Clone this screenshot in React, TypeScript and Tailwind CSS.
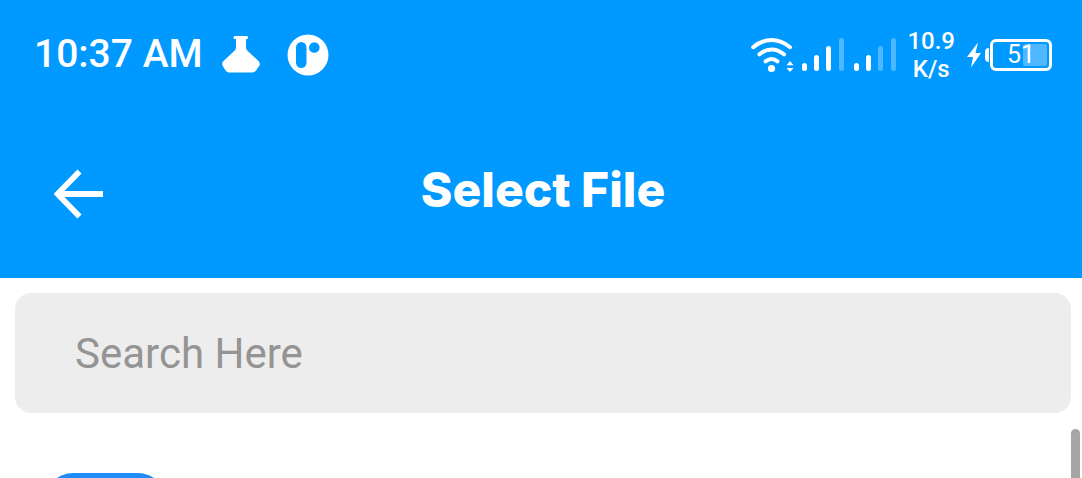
import React from "react";

function FlaskIcon() {
  return (
    <svg width="40" height="40" viewBox="0 0 40 40" fill="#fff" aria-hidden="true">
      <path d="M13.500 1h12.500q1 0 1 1.500T26 4h-1v8.500q0 2 1.500 3.200L37.500 26Q39.500 28 38.500 30.500L35 35.500Q33.500 37.500 31.500 37.500H8Q6 37.500 4.500 35.500L1.500 30.500Q.5 28 2.500 26L13.500 15.700Q15 14.500 15 12.500V4h-1.500q-1 0-1-1.500t1-1.500z" />
    </svg>
  );
}

function CircleLogo() {
  return (
    <svg width="42" height="42" viewBox="0 0 42 42" aria-hidden="true">
      <circle cx="21" cy="21" r="20.500" fill="#fff" />
      <rect x="9" y="8" width="10.500" height="26" rx="5.250" fill="#0099ff" />
      <circle cx="27.300" cy="13.500" r="5.300" fill="#0099ff" />
    </svg>
  );
}

function WifiIcon() {
  return (
    <svg width="44" height="36" viewBox="0 0 44 36" fill="none" aria-hidden="true">
      <g stroke="#fff" strokeWidth="4" strokeLinecap="round">
        <path d="M2.200 10.200Q10.500 3 20.500 3T39 10.200" />
        <path d="M8.500 17.300Q14 12.400 20.500 12.400T33 17.300" />
        <path d="M14.500 24.300Q20.500 19.800 26.500 24.300" />
      </g>
      <circle cx="20.500" cy="31.500" r="3.600" fill="#fff" />
      <path d="M35.500 28.300 39 24l3.500 4.300zM35.500 31h7L39 35z" fill="#fff" />
    </svg>
  );
}

function SignalIcon({ level }: { level: number }) {
  const bars = [
    { x: 0, y: 25, h: 8 },
    { x: 12, y: 17, h: 16 },
    { x: 24, y: 8, h: 25 },
    { x: 37, y: 0, h: 33 },
  ];
  return (
    <svg width="42" height="33" viewBox="0 0 42 33" fill="#fff" aria-hidden="true">
      {bars.map((b, i) => (
        <rect key={b.x} x={b.x} y={b.y} width="5" height={b.h} rx="2.500" fillOpacity={i < level ? 1 : 0.3} />
      ))}
    </svg>
  );
}

function BoltIcon() {
  return (
    <svg width="14" height="26" viewBox="0 0 14 26" fill="#fff" aria-hidden="true">
      <path d="M11 .5 0 15h6L4 25.500 14 11H8.500z" />
    </svg>
  );
}

function Battery() {
  return (
    <div className="flex items-center">
      <span className="h-3.5 w-1 rounded-l-sm bg-white" />
      <div className="relative ml-px flex h-8 w-[62px] items-center justify-center rounded-md border-[3px] border-white">
        <span className="absolute inset-y-0.5 right-0.5 w-6 rounded-xs bg-white/30" />
        <span className="relative text-[25px] leading-none">51</span>
      </div>
    </div>
  );
}

function StatusBar() {
  return (
    <div className="flex h-[109px] items-center justify-between pr-[30px] pl-[34px]">
      <div className="flex items-center">
        <span className="text-[39px] leading-none font-medium">10:37 AM</span>
        <span className="ml-[18px]">
          <FlaskIcon />
        </span>
        <span className="ml-[26px]">
          <CircleLogo />
        </span>
      </div>
      <div className="flex items-center">
        <WifiIcon />
        <span className="ml-[7px]">
          <SignalIcon level={3} />
        </span>
        <span className="ml-2.5">
          <SignalIcon level={2} />
        </span>
        <span className="ml-[11px] text-center text-2xl leading-7 font-medium">
          10.9
          <br />
          K/s
        </span>
        <span className="mr-1 ml-3">
          <BoltIcon />
        </span>
        <Battery />
      </div>
    </div>
  );
}

function TopBar() {
  return (
    <div className="grid h-[169px] grid-cols-[1fr_auto_1fr] items-center pr-[50px] pl-[54px]">
      <button type="button" aria-label="Back" className="justify-self-start">
        <svg width="50" height="50" viewBox="0 0 50 50" fill="none" stroke="#fff" strokeWidth="5.800" aria-hidden="true">
          <path d="M25.500 2.500 3.500 25l22 22.500M3 25h46" />
        </svg>
      </button>
      <h1 className="pb-2 font-['Inter',sans-serif] text-5xl leading-none font-extrabold">Select File</h1>
    </div>
  );
}

export default function App() {
  return (
    <div className="flex h-screen flex-col overflow-hidden bg-white font-['Roboto',sans-serif]">
      <header className="shrink-0 bg-[#0099ff] text-white">
        <StatusBar />
        <TopBar />
      </header>
      <div className="shrink-0 pt-[15px] pr-[11px] pl-[15px]">
        <input
          type="search"
          aria-label="Search"
          placeholder="Search Here"
          className="block h-[120px] w-full rounded-2xl bg-[#ededed] px-[60px] text-[42px] text-gray-800 outline-none placeholder:text-[#949494]"
        />
      </div>
      <main className="relative min-h-0 flex-1 overflow-hidden px-[45px] pt-[60px]">
        <div className="h-[120px] w-[121px] rounded-[28px] bg-[#1e8cfb]" />
        <span className="absolute top-4 right-0.5 h-40 w-[9px] rounded-full bg-[#a6a6a6]" />
      </main>
    </div>
  );
}
